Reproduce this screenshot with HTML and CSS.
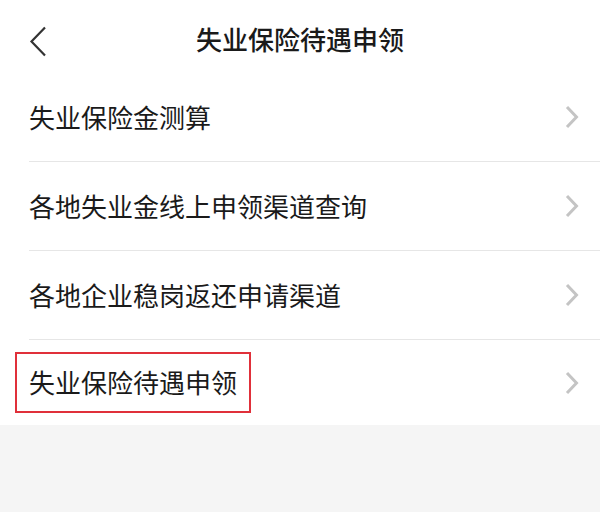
FILE: index.html
```html
<!DOCTYPE html>
<html>
<head>
    <meta charset="utf-8">
    <title>失业保险待遇申领</title>
    <link rel="stylesheet" href="styles.css">
</head>
<body>
    <div class="header">
        <span class="back">
            <svg width="18" height="31" viewBox="0 0 18 31">
                <path d="M16 1.5 L2.5 15.5 L16 29.5" fill="none" stroke="#333" stroke-width="2.2"/>
            </svg>
        </span>
        <h1 class="title">失业保险待遇申领</h1>
    </div>

    <div class="list">
        <div class="item">
            <span class="label">失业保险金测算</span>
            <span class="arrow"><svg width="14" height="24" viewBox="0 0 14 24"><path d="M2 2 L11.5 12 L2 22" fill="none" stroke="#c4c4c4" stroke-width="3"/></svg></span>
        </div>
        <div class="item">
            <span class="label">各地失业金线上申领渠道查询</span>
            <span class="arrow"><svg width="14" height="24" viewBox="0 0 14 24"><path d="M2 2 L11.5 12 L2 22" fill="none" stroke="#c4c4c4" stroke-width="3"/></svg></span>
        </div>
        <div class="item">
            <span class="label">各地企业稳岗返还申请渠道</span>
            <span class="arrow"><svg width="14" height="24" viewBox="0 0 14 24"><path d="M2 2 L11.5 12 L2 22" fill="none" stroke="#c4c4c4" stroke-width="3"/></svg></span>
        </div>
        <div class="item last">
            <span class="label marked">失业保险待遇申领</span>
            <span class="arrow"><svg width="14" height="24" viewBox="0 0 14 24"><path d="M2 2 L11.5 12 L2 22" fill="none" stroke="#c4c4c4" stroke-width="3"/></svg></span>
        </div>
    </div>
</body>
</html>
```

FILE: styles.css
```css
body {
    margin: 0;
    background-color: #f5f5f5;
    font-family: "Noto Sans CJK SC", "Noto Sans", sans-serif;
    color: #1a1a1a;
}

.header {
    position: relative;
    height: 73px;
    background-color: #fff;
    display: flex;
    align-items: center;
    justify-content: center;
}

.back {
    position: absolute;
    left: 29px;
    top: 26px;
    display: flex;
}

.title {
    margin: 0;
    font-size: 26px;
    font-weight: 500;
    line-height: 1;
    padding-top: 4px;
}

.list {
    background-color: #fff;
    padding-left: 29px;
}

.item {
    height: 88px;
    display: flex;
    align-items: center;
    justify-content: space-between;
    border-bottom: 1px solid #e6e6e6;
    padding-right: 21px;
}

.item.last {
    height: 85px;
    border-bottom: none;
}

.label {
    font-size: 26px;
    line-height: 1;
    position: relative;
}

.marked {
    margin-left: -14px;
    padding: 15px 12px 16px 12px;
    border: 2px solid #e0303a;
}

.arrow {
    display: flex;
}
```
